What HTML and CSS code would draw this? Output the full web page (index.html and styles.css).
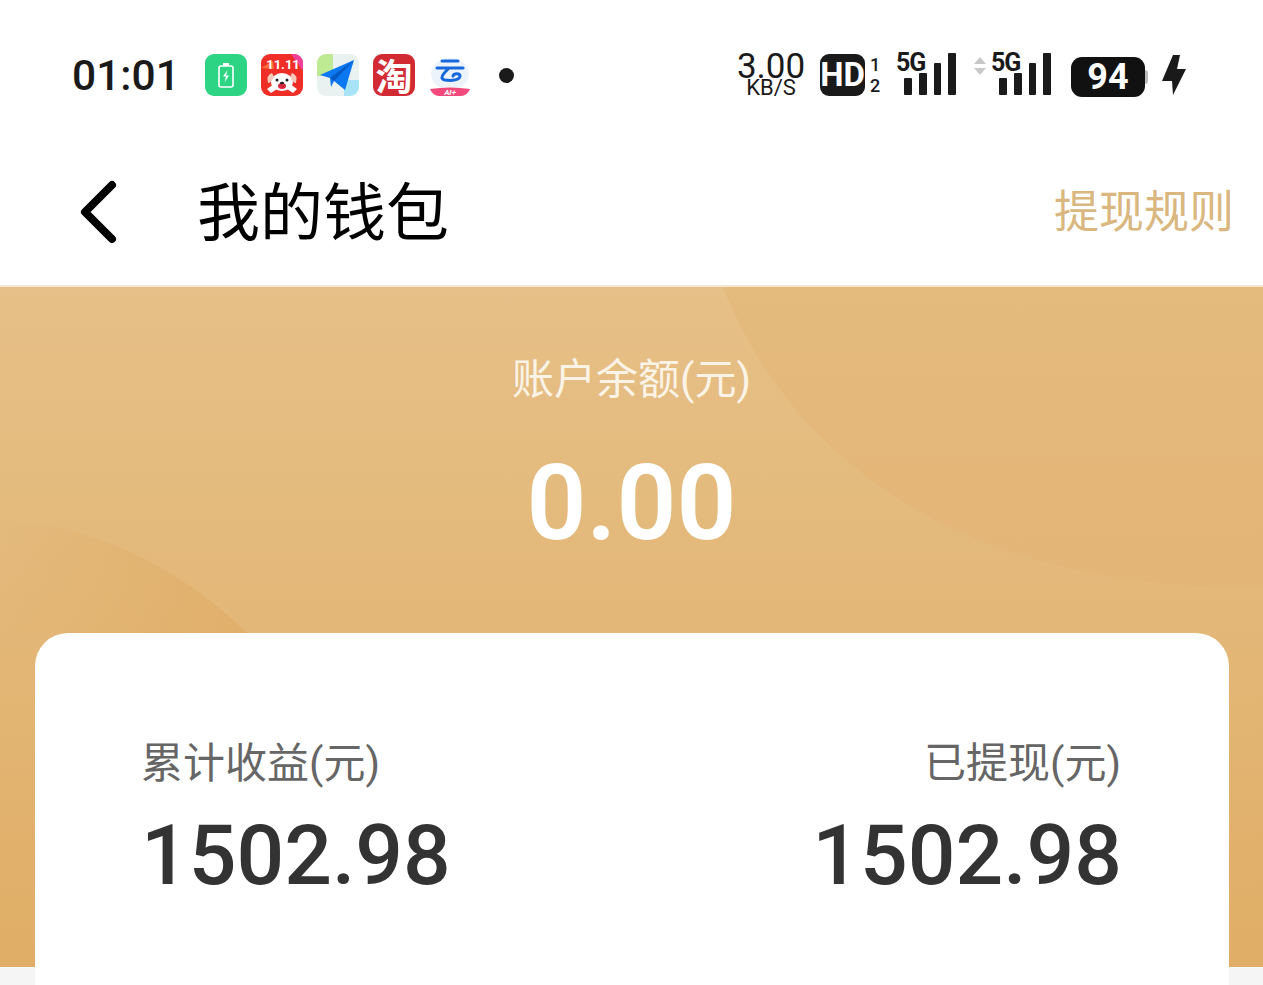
FILE: index.html
```html
<!DOCTYPE html>
<html>
<head>
    <meta charset="utf-8">
    <title>我的钱包</title>
    <link rel="stylesheet" href="styles.css">
</head>
<body>

    <!-- Status bar -->
    <div class="status">
        <div class="status-left">
            <span class="time">01:01</span>
            <div class="apps">
                <svg class="app" viewBox="0 0 42 42">
                    <rect width="42" height="42" rx="9" fill="#2dd484"/>
                    <path d="M18 9h6v3h-6z" fill="#fff"/>
                    <rect x="14" y="12" width="14" height="21" rx="2" fill="none" stroke="#fff" stroke-width="1.6"/>
                    <path d="M22.5 16l-4.5 6.5h3l-1.500 6 4.500-7h-3z" fill="#fff"/>
                </svg>
                <svg class="app" viewBox="0 0 42 42">
                    <rect width="42" height="42" rx="9" fill="#ef2f27"/>
                    <path d="M30 0h3a9 9 0 0 1 9 9v8z" fill="#f0409a"/>
                    <path d="M0 14l12-7 1 8z" fill="#f8713a"/>
                    <text x="22" y="15" class="app-mini">11.11</text>
                    <path d="M6 35l7-5 3 5-6 4zM36 35l-7-5-3 5 6 4z" fill="#fff"/>
                    <ellipse cx="21" cy="28" rx="11" ry="9" fill="#fff"/>
                    <path d="M11 19q-6 2-4 10 3 0 6-6zM31 19q6 2 4 10-3 0-6-6z" fill="#f4c9bb"/>
                    <circle cx="16" cy="26" r="1.500" fill="#222"/>
                    <circle cx="26" cy="26" r="1.500" fill="#222"/>
                    <ellipse cx="21" cy="32" rx="4" ry="3" fill="#d8263c"/>
                    <ellipse cx="21" cy="29" rx="2" ry="1.300" fill="#222"/>
                </svg>
                <svg class="app" viewBox="0 0 42 42">
                    <rect width="42" height="42" rx="9" fill="#e9f2f0"/>
                    <path d="M0 9a9 9 0 0 1 9-9h7v22H0z" fill="#bdea92"/>
                    <path d="M27 26h15v7a9 9 0 0 1-9 9h-6z" fill="#a8e3f7"/>
                    <path d="M3 21L37 6 28 36 17 27l-3 6-1-9z" fill="#0a78f0"/>
                    <path d="M13 24L37 6 17 27z" fill="#0658c4"/>
                </svg>
                <div class="app app-tao">淘</div>
                <svg class="app" viewBox="0 0 42 42">
                    <ellipse cx="21" cy="20" rx="19" ry="16" fill="#edf3fb"/>
                    <path d="M13 7h16M8 14h26" stroke="#1668dc" stroke-width="3" fill="none" stroke-linecap="round"/>
                    <path d="M19 15c-5 5-9 10-3 11 7 1 15 0 15-4 0-3-6-3-7 0" stroke="#1668dc" stroke-width="3" fill="none" stroke-linecap="round"/>
                    <path d="M1 35q20-3 40 0q-3 7-9 7H10q-6 0-9-7z" fill="#f2497c"/>
                    <text x="21" y="41" class="app-ai">AI+</text>
                </svg>
            </div>
            <span class="dot"></span>
        </div>
        <div class="status-right">
            <div class="speed">
                <span class="speed-num">3.00</span>
                <span class="speed-unit">KB/S</span>
            </div>
            <div class="hd">HD</div>
            <div class="sim-no"><span>1</span><span>2</span></div>
            <div class="signal">
                <span class="g5">5G</span>
                <i class="b1"></i><i class="b2"></i><i class="b3"></i><i class="b4"></i>
            </div>
            <svg class="updown" viewBox="0 0 14 18">
                <path d="M7 0l6 7H1zM7 18l6-7H1z" fill="#c8c8c8"/>
            </svg>
            <div class="signal signal-two">
                <span class="g5">5G</span>
                <i class="b1"></i><i class="b2"></i><i class="b3"></i><i class="b4"></i>
            </div>
            <div class="battery">94</div>
            <span class="battery-tip"></span>
            <svg class="bolt" viewBox="0 0 26 42">
                <path d="M12 1h7L16 15h9L12 41l-1-14H1z" fill="#1a1a1a"/>
            </svg>
        </div>
    </div>

    <!-- Nav -->
    <div class="nav">
        <svg class="back" viewBox="0 0 40 64">
            <path d="M33 5L6 32l27 27" fill="none" stroke="#000" stroke-width="8" stroke-linecap="round" stroke-linejoin="round"/>
        </svg>
        <h1>我的钱包</h1>
        <span class="rule">提现规则</span>
    </div>

    <!-- Balance -->
    <div class="hero">
        <svg class="hero-bg" viewBox="0 0 1263 680" preserveAspectRatio="none">
            <defs>
                <linearGradient id="leftShape" x1="0" y1="0" x2="1" y2="0">
                    <stop offset="0" stop-color="#e0ae68" stop-opacity="0"/>
                    <stop offset="1" stop-color="#e0ae68" stop-opacity="0.8"/>
                </linearGradient>
            </defs>
            <path d="M723 0C790 170 960 305 1263 300V0z" fill="#e3b474" opacity="0.55"/>
            <path d="M0 235C100 235 190 290 247 346H0z" fill="url(#leftShape)"/>
        </svg>
        <div class="hero-label">账户余额(元)</div>
        <div class="hero-num">0.00</div>
        <div class="card">
            <div class="col">
                <div class="col-label">累计收益(元)</div>
                <div class="col-num">1502.98</div>
            </div>
            <div class="col col-right">
                <div class="col-label">已提现(元)</div>
                <div class="col-num">1502.98</div>
            </div>
        </div>
    </div>

</body>
</html>
```

FILE: styles.css
```css
html, body {
    margin: 0;
    padding: 0;
}
body {
    width: 1263px;
    height: 985px;
    overflow: hidden;
    background: #f5f5f5;
    font-family: Roboto, "Noto Sans CJK SC", sans-serif;
}

/* Status bar */
.status {
    height: 140px;
    padding: 10px 76px 0 72px;
    box-sizing: border-box;
    background: #fff;
    display: flex;
    justify-content: space-between;
    align-items: center;
    color: #1a1a1a;
}
.status-left, .status-right {
    display: flex;
    align-items: center;
}
.time {
    font-size: 42.5px;
    font-weight: 500;
    width: 133px;
}
.apps {
    display: flex;
    gap: 14px;
}
.app {
    width: 42px;
    height: 42px;
    display: block;
}
.app-mini {
    font-size: 13px;
    font-weight: 700;
    fill: #fff;
    text-anchor: middle;
}
.app-ai {
    font-size: 8px;
    font-weight: 700;
    font-style: italic;
    fill: #fff;
    text-anchor: middle;
}
.app-tao {
    background: #d22a33;
    color: #fff;
    border-radius: 9px;
    font-size: 37px;
    font-weight: 700;
    line-height: 42px;
    text-align: center;
    font-family: "Noto Sans CJK SC", sans-serif;
}
.dot {
    width: 15px;
    height: 15px;
    border-radius: 50%;
    background: #1a1a1a;
    margin-left: 28px;
}
.speed {
    width: 98px;
    height: 50px;
    display: flex;
    flex-direction: column;
    align-items: center;
    line-height: 1;
}
.speed-num {
    font-size: 35px;
    height: 27px;
    line-height: 34px;
}
.speed-unit {
    font-size: 22px;
    line-height: 22px;
}
.hd {
    width: 45px;
    height: 42px;
    background: #1a1a1a;
    color: #fff;
    border-radius: 9px;
    font-family: "Liberation Sans Narrow", Roboto, sans-serif;
    font-size: 33px;
    font-weight: 700;
    line-height: 42px;
    text-align: center;
}
.sim-no {
    width: 12px;
    margin-left: 4px;
    display: flex;
    flex-direction: column;
    font-size: 18px;
    font-weight: 500;
    line-height: 21px;
    text-align: center;
}
.signal {
    width: 60px;
    height: 44px;
    margin: 0 0 4px 15px;
    display: flex;
    align-items: flex-end;
    gap: 7px;
    padding-left: 8px;
    box-sizing: border-box;
    position: relative;
}
.signal i {
    width: 8px;
    background: #1a1a1a;
    border-radius: 1px;
    display: block;
}
.b1 { height: 17px; }
.b2 { height: 22px; }
.b3 { height: 32px; }
.b4 { height: 42px; }
.g5 {
    position: absolute;
    left: 0;
    top: 0;
    font-family: "Liberation Sans Narrow", Roboto, sans-serif;
    font-size: 25px;
    font-weight: 700;
    letter-spacing: -1px;
    line-height: 24px;
}
.updown {
    width: 14px;
    height: 18px;
    margin: 0 0 18px 17px;
}
.signal-two {
    margin-left: 4px;
}
.battery {
    width: 74px;
    height: 40px;
    margin: 3px 0 0 20px;
    background: #111;
    color: #fff;
    border-radius: 11px;
    font-size: 36px;
    font-weight: 700;
    line-height: 41px;
    text-align: center;
}
.battery-tip {
    width: 3px;
    height: 14px;
    margin-top: 3px;
    background: #bbb;
    border-radius: 0 3px 3px 0;
}
.bolt {
    width: 26px;
    height: 42px;
    margin-left: 13px;
}

/* Nav */
.nav {
    height: 147px;
    background: #fff;
    display: flex;
    align-items: center;
    padding: 0 29px 0 79px;
    box-sizing: border-box;
    border-bottom: 2px solid #f3e6d3;
    font-family: "Noto Sans CJK SC", sans-serif;
}
.back {
    width: 40px;
    height: 64px;
    margin-bottom: 2px;
}
.nav h1 {
    margin: 0 0 10px 78px;
    flex: 1;
    font-size: 63px;
    font-weight: 400;
    color: #000;
    line-height: 1;
}
.rule {
    font-size: 45px;
    color: #d9b77f;
    margin-bottom: 8px;
}

/* Balance */
.hero {
    height: 680px;
    position: relative;
    background: linear-gradient(180deg, #e6c088 0%, #e0ae66 100%);
    text-align: center;
    padding-top: 63px;
    box-sizing: border-box;
}
.hero-bg {
    position: absolute;
    left: 0;
    top: 0;
    width: 100%;
    height: 100%;
}
.hero-label {
    position: relative;
    font-size: 42px;
    line-height: 60px;
    color: #fbf3e6;
}
.hero-num {
    position: relative;
    font-size: 105px;
    font-weight: 600;
    line-height: 124px;
    margin-top: 32px;
    color: #fff;
}
.card {
    position: relative;
    width: 1194px;
    height: 400px;
    margin: 67px 0 0 35px;
    padding: 101px 108px 0 106px;
    box-sizing: border-box;
    background: #fff;
    border-radius: 33px;
    display: flex;
    justify-content: space-between;
    text-align: left;
}
.col-right {
    text-align: right;
}
.col-right .col-num {
    margin-right: -1px;
}
.col-label {
    font-size: 42px;
    line-height: 60px;
    color: #666;
}
.col-num {
    font-size: 84px;
    font-weight: 500;
    line-height: 98px;
    margin-top: 13px;
    color: #333;
}
```
